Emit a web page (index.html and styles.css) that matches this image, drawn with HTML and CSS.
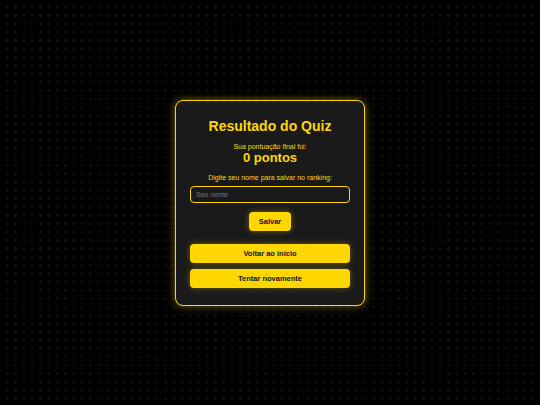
FILE: index.html
```html
<!DOCTYPE html>
<html lang="pt-BR">

<head>
  <meta charset="UTF-8">
  <title>Resultado do Quiz</title>
  <link rel="stylesheet" href="styles.css">
</head>

<body>
  <div class="result-card">
    <h2>Resultado do Quiz</h2>

    <p class="score-label">Sua pontuação final foi:</p>
    <p class="score">0 pontos</p>

    <p class="save-label">Digite seu nome para salvar no ranking:</p>
    <input type="text" class="name-input" placeholder="Seu nome" />

    <button class="btn btn-save">Salvar</button>

    <div class="action-btns">
      <button class="btn btn-wide">Voltar ao início</button>
      <button class="btn btn-wide">Tentar novamente</button>
    </div>
  </div>
</body>

</html>
```

FILE: styles.css
```css
body {
  margin: 0;
  font-family: 'Liberation Sans', Arial, sans-serif;
  background-color: #000;
  background-image: radial-gradient(circle, #151515 1px, transparent 1.2px);
  background-size: 8.33px 8.33px;
  background-position: 3px 3px;
  min-height: 100vh;
  display: flex;
  align-items: center;
  justify-content: center;
  box-sizing: border-box;
}

.result-card {
  width: 190px;
  box-sizing: border-box;
  padding: 17px 14px 17px;
  background: #1a1a1a;
  border: 1px solid #ffd700;
  border-radius: 8px;
  box-shadow: 0 0 8px rgba(255, 215, 0, 0.45);
  text-align: center;
  color: #ffd700;
  display: flex;
  flex-direction: column;
  align-items: center;
}

h2 {
  font-size: 14px;
  margin: 0 0 7px;
  line-height: 17px;
}

.score-label,
.save-label {
  font-size: 7px;
  margin: 0;
  line-height: 9px;
}

.score {
  font-size: 13px;
  font-weight: bold;
  margin: -1px 0 8px;
  line-height: 15px;
}

.name-input {
  width: 100%;
  height: 17px;
  box-sizing: border-box;
  margin-top: 4px;
  padding: 0 5px;
  background: #1a1a1a;
  border: 1px solid #ffd700;
  border-radius: 4px;
  color: #ffd700;
  font-family: inherit;
  font-size: 7px;
  outline: none;
}

.name-input::placeholder {
  color: #777;
}

.btn {
  background: #ffd700;
  border: none;
  border-radius: 4px;
  color: #111;
  font-family: inherit;
  font-size: 7.5px;
  font-weight: bold;
  cursor: pointer;
  box-shadow: 0 0 6px rgba(255, 215, 0, 0.35);
}

.btn-save {
  margin-top: 9px;
  width: 42px;
  height: 19px;
}

.action-btns {
  width: 100%;
  margin-top: 13px;
  display: flex;
  flex-direction: column;
  gap: 6px;
}

.btn-wide {
  width: 100%;
  height: 19px;
}
```
